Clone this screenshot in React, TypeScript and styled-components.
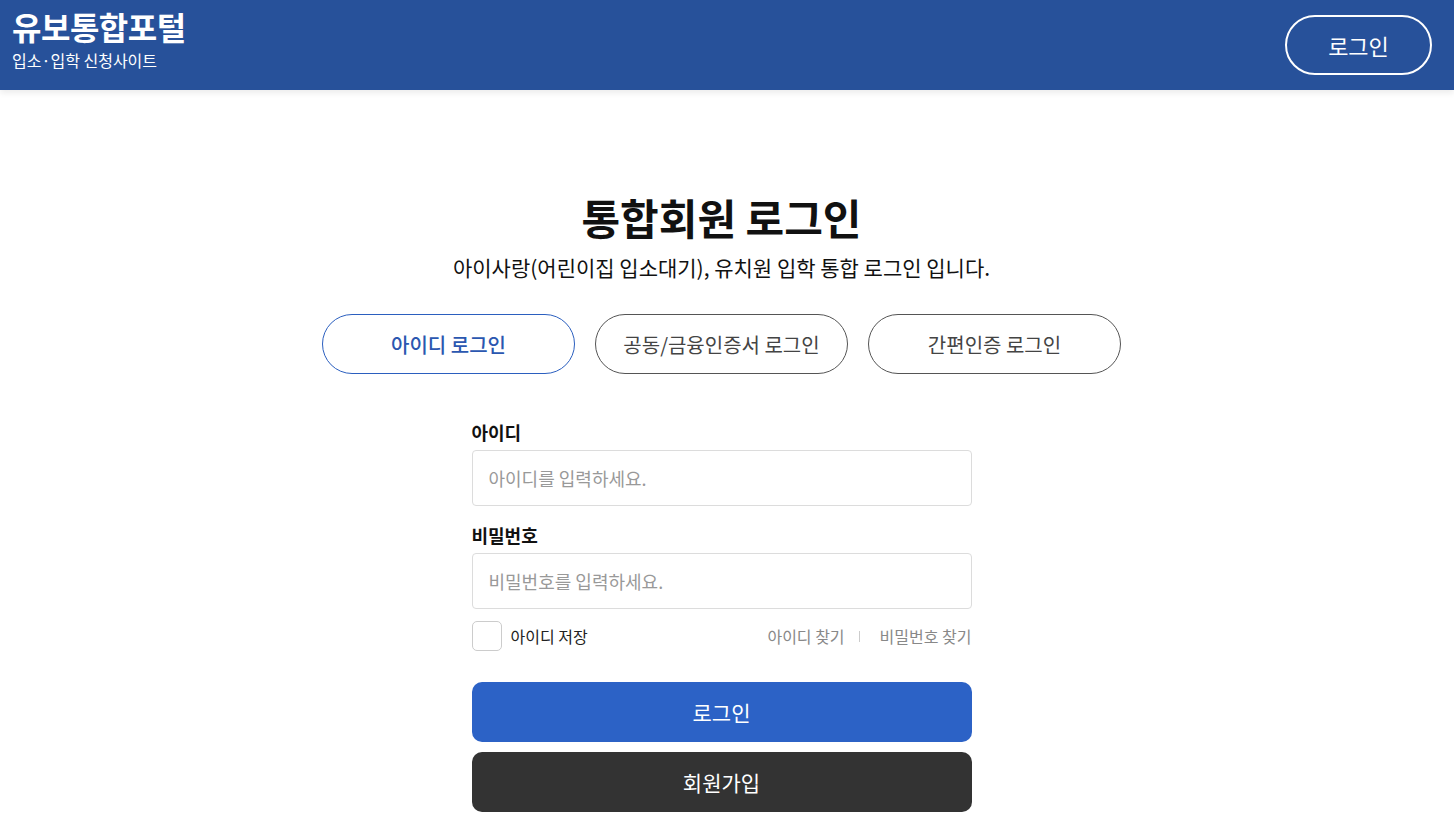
import React, { useState } from 'react';
import styled, { createGlobalStyle } from 'styled-components';

const GlobalStyle = createGlobalStyle`
  html, body {
    margin: 0;
    padding: 0;
    background: #fff;
    font-family: 'Noto Sans CJK KR', 'Noto Sans', sans-serif;
    color: #111;
  }
  * { box-sizing: border-box; }
`;

const Header = styled.header`
  height: 90px;
  background-color: #27519a;
  display: flex;
  align-items: center;
  justify-content: space-between;
  padding: 0 22px 0 12px;
  box-shadow: 0 3px 6px rgba(0, 0, 0, 0.08);
  position: relative;
`;

const Brand = styled.div`
  display: flex;
  flex-direction: column;
  color: #fff;
  margin-top: -14px;
`;

const BrandTitle = styled.h1`
  margin: 0;
  font-size: 32px;
  font-weight: 700;
  line-height: 40px;
  letter-spacing: -0.5px;
`;

const BrandSub = styled.span`
  font-size: 16px;
  line-height: 22px;
  margin-top: 3px;
`;

const HeaderButton = styled.button`
  width: 147px;
  height: 60px;
  border: 2px solid #fff;
  border-radius: 30px;
  background: transparent;
  color: #fff;
  font-family: inherit;
  font-size: 22px;
  cursor: pointer;
`;

const Main = styled.main`
  display: flex;
  flex-direction: column;
  align-items: center;
  padding: 99px 11px 0 0;
`;

const Title = styled.h2`
  margin: 0;
  font-size: 42px;
  font-weight: 700;
  line-height: 56px;
`;

const Subtitle = styled.p`
  margin: 8px 0 0;
  font-size: 21px;
  line-height: 28px;
  color: #111;
`;

const Tabs = styled.div`
  display: flex;
  gap: 20px;
  margin-top: 33px;
`;

const Tab = styled.button<{ $active?: boolean }>`
  width: 253px;
  height: 60px;
  border-radius: 30px;
  border: 1px solid ${(p) => (p.$active ? '#2b5fbf' : '#555')};
  background: #fff;
  color: ${(p) => (p.$active ? '#2b57b0' : '#444')};
  font-family: inherit;
  font-size: 20px;
  font-weight: ${(p) => (p.$active ? 500 : 400)};
  cursor: pointer;
`;

const Form = styled.form`
  width: 500px;
  margin-top: 45px;
  display: flex;
  flex-direction: column;
`;

const Label = styled.label`
  font-size: 18px;
  font-weight: 700;
  line-height: 26px;
  margin-bottom: 5px;
`;

const Input = styled.input`
  height: 56px;
  border: 1px solid #dcdcdc;
  border-radius: 4px;
  padding: 0 16px;
  font-family: inherit;
  font-size: 18px;
  color: #111;
  margin-bottom: 16px;
  &::placeholder { color: #999; }
`;

const OptionRow = styled.div`
  display: flex;
  align-items: center;
  justify-content: space-between;
  margin-top: -4px;
`;

const Remember = styled.label`
  display: flex;
  align-items: center;
  gap: 9px;
  font-size: 16px;
  color: #222;
`;

const Check = styled.span`
  width: 30px;
  height: 30px;
  border: 1px solid #ccc;
  border-radius: 5px;
  background: #fff;
`;

const Links = styled.div`
  display: flex;
  align-items: center;
  font-size: 16px;
  color: #888;
`;

const Divider = styled.span`
  width: 1px;
  height: 11px;
  background: #ccc;
  margin: 0 20px 0 14px;
`;

const ActionButton = styled.button<{ $dark?: boolean }>`
  height: 60px;
  border: none;
  border-radius: 10px;
  background: ${(p) => (p.$dark ? '#333' : '#2c62c6')};
  color: #fff;
  font-family: inherit;
  font-size: 21px;
  cursor: pointer;
  margin-top: ${(p) => (p.$dark ? '10px' : '31px')};
`;

export default function App() {
  const [tab, setTab] = useState(0);
  const tabs = ['아이디 로그인', '공동/금융인증서 로그인', '간편인증 로그인'];

  return (
    <>
      <GlobalStyle />
      <Header>
        <Brand>
          <BrandTitle>유보통합포털</BrandTitle>
          <BrandSub>입소·입학 신청사이트</BrandSub>
        </Brand>
        <HeaderButton>로그인</HeaderButton>
      </Header>
      <Main>
        <Title>통합회원 로그인</Title>
        <Subtitle>아이사랑(어린이집 입소대기), 유치원 입학 통합 로그인 입니다.</Subtitle>
        <Tabs>
          {tabs.map((t, i) => (
            <Tab key={t} $active={tab === i} onClick={() => setTab(i)}>
              {t}
            </Tab>
          ))}
        </Tabs>
        <Form onSubmit={(e) => e.preventDefault()}>
          <Label>아이디</Label>
          <Input placeholder="아이디를 입력하세요." />
          <Label>비밀번호</Label>
          <Input type="password" placeholder="비밀번호를 입력하세요." />
          <OptionRow>
            <Remember>
              <Check />
              아이디 저장
            </Remember>
            <Links>
              <span>아이디 찾기</span>
              <Divider />
              <span>비밀번호 찾기</span>
            </Links>
          </OptionRow>
          <ActionButton type="submit">로그인</ActionButton>
          <ActionButton type="button" $dark>회원가입</ActionButton>
        </Form>
      </Main>
    </>
  );
}
